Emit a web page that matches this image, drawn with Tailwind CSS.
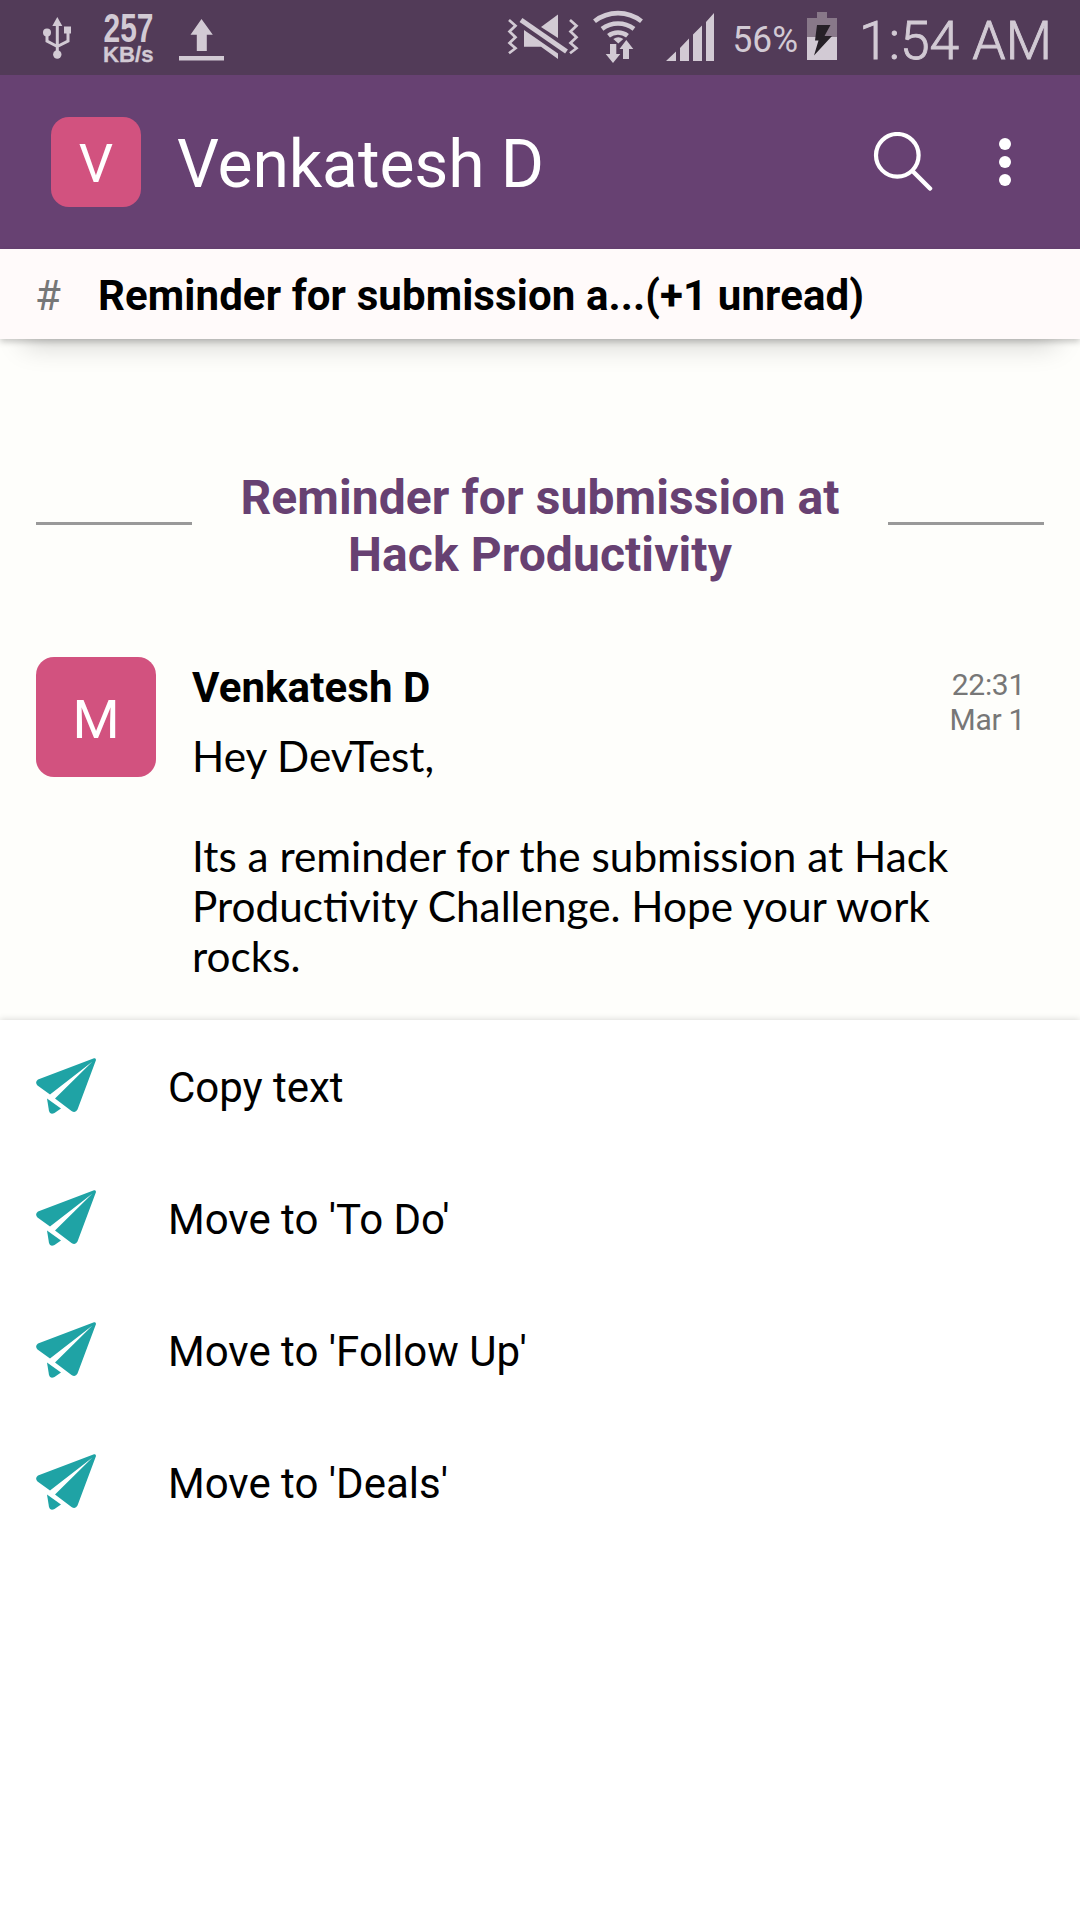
<!DOCTYPE html>
<html lang="en">
<head>
    <meta charset="UTF-8">
    <meta name="viewport" content="width=device-width, initial-scale=1.0">
    <title>Venkatesh D</title>
    <script src="https://cdn.jsdelivr.net/npm/@tailwindcss/browser@4"></script>
    <style>
        body {
            font-family: Roboto, sans-serif;
        }
    </style>
</head>
<body>
    <div class="w-[1080px] h-[1920px] flex flex-col overflow-hidden bg-[#fefefb] text-black">
        <!-- Status bar -->
        <div class="h-[75px] shrink-0 bg-[#523b58] text-[#d2cad4]">
            <svg class="block" width="1080" height="75" viewBox="0 0 1080 75" fill="currentColor">
                <!-- USB -->
                <path d="M57.3 17l5 9h-10z"/>
                <path d="M57.3 24v28M47 34v7l10.3 5.500M68 32v9l-10.700 5.500" fill="none" stroke="currentColor" stroke-width="3"/>
                <circle cx="47" cy="32.500" r="4"/>
                <circle cx="57.300" cy="54.500" r="4.200"/>
                <rect x="64" y="26.500" width="7" height="7"/>
                <!-- Network speed -->
                <text x="103.500" y="41.500" font-family="Liberation Sans" font-weight="700" font-size="40" textLength="50" lengthAdjust="spacingAndGlyphs">257</text>
                <text x="103" y="62" font-family="Liberation Sans" font-weight="700" font-size="21.500" stroke="currentColor" stroke-width="0.300" textLength="50.500" lengthAdjust="spacingAndGlyphs">KB/s</text>
                <!-- Upload -->
                <path d="M201.500 19l11.300 15.700h-6V51h-10V34.700h-6.300zM179 56h45v4.500h-45z"/>
                <!-- Sound off, vibrate -->
                <path d="M509 20l6.500 5.700-6 5.800 6 5.700-6 5.800 6 5.300-6.500 5M570 20l6.500 5.700-6 5.800 6 5.700-6 5.800 6 5.300-6.500 5" fill="none" stroke="currentColor" stroke-width="2.700"/>
                <path d="M524 30l34 23.500v5.500l-17-12.300h-17z"/>
                <path d="M541 27l17-12.500v23.500z"/>
                <path d="M521 20l45.500 31.500" stroke="currentColor" stroke-width="5"/>
                <!-- Wifi -->
                <g fill="none" stroke="currentColor" stroke-width="4.600">
                    <path d="M594.500 21.300a38 38 0 0 1 47 0"/>
                    <path d="M602 28.800a27 27 0 0 1 32 0"/>
                    <path d="M608.500 35.800a15.500 15.500 0 0 1 19 0"/>
                </g>
                <path d="M618.300 43.500l-5-4.500q5-3.500 10 0z"/>
                <path d="M610 44h6.300v10h4L613 63l-7.300-9H610zM623 59V49h-3.500l6.800-9 7 9H629v10z"/>
                <!-- Signal -->
                <path d="M666 61l10-9.500V61zM680 48l9-9.500V61h-9zM693 34.500l9-9V61h-9zM706 22l8-9v48h-8z"/>
                <text x="732.500" y="52" font-size="36" textLength="65.500" lengthAdjust="spacingAndGlyphs">56%</text>
                <!-- Battery -->
                <path d="M817 12h10v6h10v19h-30V18h10z" fill="#887889"/>
                <path d="M807 37h30v23h-30z"/>
                <path d="M817 25h13.500L824.500 36h7.500L814 55.500l4.500-15H815z" fill="#262027"/>
                <text x="859" y="59" font-size="54" font-weight="300" stroke="currentColor" stroke-width="0.900" textLength="193" lengthAdjust="spacingAndGlyphs">1:54 AM</text>
            </svg>
        </div>

        <!-- Header -->
        <header class="h-[174px] shrink-0 flex items-center bg-[#674172] text-white pl-[51px] pr-[69px]">
            <div class="size-[90px] rounded-[18px] bg-[#d2527f] flex items-center justify-center text-[54px] leading-none pt-1">V</div>
            <h1 class="ml-[36px] pt-[6px] text-[66px] leading-none tracking-[-0.1px]">Venkatesh D</h1>
            <svg class="ml-auto" width="60" height="60" viewBox="0 0 60 60" fill="none" stroke="#fff" stroke-width="4.200" stroke-linecap="round">
                <circle cx="24.300" cy="23.300" r="21.300"/>
                <path d="M40 39.500l17 17" stroke-width="4.500"/>
            </svg>
            <svg class="ml-[66px]" width="12" height="48" viewBox="0 0 12 48" fill="#fff">
                <circle cx="6" cy="6" r="6"/>
                <circle cx="6" cy="24" r="6"/>
                <circle cx="6" cy="42" r="6"/>
            </svg>
        </header>

        <!-- Channel bar -->
        <div class="relative h-[90px] shrink-0 flex items-center bg-[#fffafa] pl-[35px] pt-[3px] text-[42px] shadow-[0_30px_28px_-24px_rgba(0,0,0,0.18),0_3px_6px_rgba(0,0,0,0.2)]">
            <span class="w-[63px] text-[#777]">#</span>
            <span class="font-bold tracking-[0.1px]">Reminder for submission a...(+1 unread)</span>
        </div>

        <!-- Messages -->
        <main class="h-[681px] shrink-0 px-[36px] pt-[127px]">
            <div class="flex items-center justify-between">
                <div class="w-[156px] h-[3px] bg-[#999]"></div>
                <h2 class="w-[640px] h-[114px] pt-[3px] text-center text-[48px] leading-[57px] font-bold tracking-[0.09px] text-[#674172]">Reminder for submission at<br>Hack Productivity</h2>
                <div class="w-[156px] h-[3px] bg-[#999]"></div>
            </div>

            <div class="flex mt-[77px]">
                <div class="size-[120px] rounded-[18px] bg-[#d2527f] text-white flex items-center justify-center text-[54px] leading-none pt-[5px]">M</div>
                <div class="ml-[36px] pt-[6px] w-[852px]">
                    <div class="flex justify-between">
                        <div class="text-[42px] leading-[50px] font-bold tracking-[0.1px]">Venkatesh D</div>
                        <div class="mr-[19px] pt-[4px] h-0 text-right text-[30px] leading-[35px] tracking-[-0.3px] text-[#777]">22:31<br>Mar 1</div>
                    </div>
                    <div class="mt-[18px] w-[800px] font-[Lato] text-[42.3px] leading-[50px]">
                        <p>Hey DevTest,</p>
                        <p class="mt-[50px]">Its a reminder for the submission at Hack Productivity Challenge. Hope your work rocks.</p>
                    </div>
                </div>
            </div>
        </main>

        <!-- Bottom sheet -->
        <ul class="relative grow bg-white text-[42px] shadow-[0_0_7px_rgba(0,0,0,0.17)]">
            <li class="h-[132px] flex items-center px-[36px]">
                <svg class="w-[60px] h-[56px] fill-[#1fa3a5]" viewBox="0 0 60 56"><use href="#plane"/></svg>
                <span class="ml-[72px] pt-[3px]">Copy text</span>
            </li>
            <li class="h-[132px] flex items-center px-[36px]">
                <svg class="w-[60px] h-[56px] fill-[#1fa3a5]" viewBox="0 0 60 56"><use href="#plane"/></svg>
                <span class="ml-[72px] pt-[3px]">Move to 'To Do'</span>
            </li>
            <li class="h-[132px] flex items-center px-[36px]">
                <svg class="w-[60px] h-[56px] fill-[#1fa3a5]" viewBox="0 0 60 56"><use href="#plane"/></svg>
                <span class="ml-[72px] pt-[3px]">Move to 'Follow Up'</span>
            </li>
            <li class="h-[132px] flex items-center px-[36px]">
                <svg class="w-[60px] h-[56px] fill-[#1fa3a5]" viewBox="0 0 60 56"><use href="#plane"/></svg>
                <span class="ml-[72px] pt-[3px]">Move to 'Deals'</span>
            </li>
        </ul>
    </div>

    <svg class="hidden">
        <symbol id="plane" viewBox="0 0 60 56">
            <path d="M58 0.300Q60 -0.300 60 2L41.500 51.500Q39.500 55.500 35.500 53L19 40.500L56.500 3.500L14 36.500L1.500 27.500Q-1.500 24 2 21.500z"/>
            <path d="M11 40.500L25 50.500L18.500 55Q14 57 13 53z"/>
        </symbol>
    </svg>
</body>
</html>
